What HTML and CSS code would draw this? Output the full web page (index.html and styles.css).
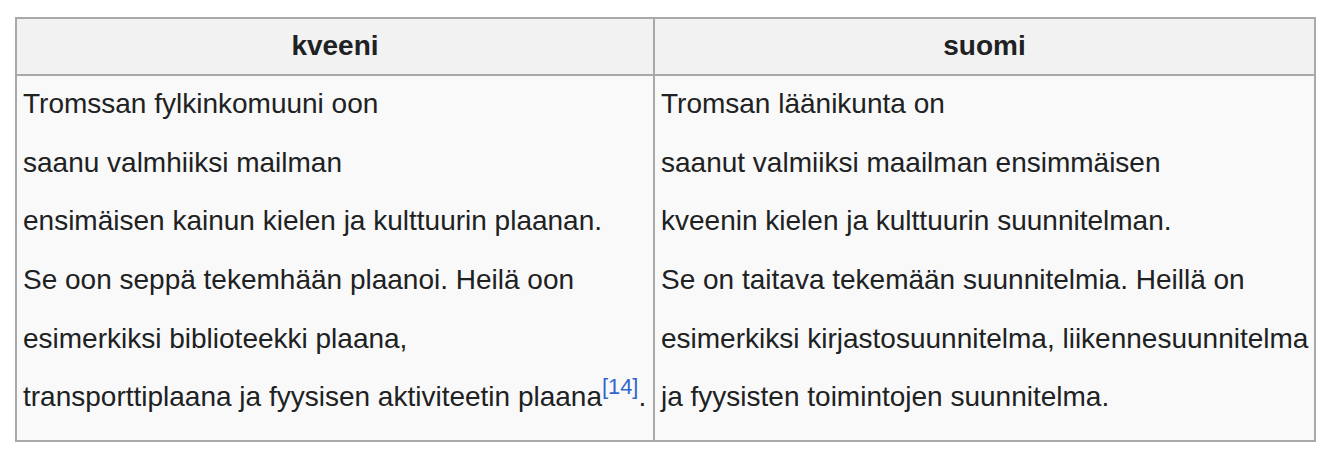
FILE: index.html
```html
<!DOCTYPE html>
<html lang="fi">
<head>
<meta charset="utf-8">
<title>kveeni / suomi</title>
<link rel="stylesheet" href="styles.css">
</head>
<body>
<div class="page">
  <table class="wikitable">
    <thead>
      <tr>
        <th class="col-a">kveeni</th>
        <th class="col-b">suomi</th>
      </tr>
    </thead>
    <tbody>
      <tr>
        <td>
          <div class="lines">
            <div class="line">Tromssan fylkinkomuuni oon</div>
            <div class="line">saanu valmhiiksi mailman</div>
            <div class="line">ensimäisen kainun kielen ja kulttuurin plaanan.</div>
            <div class="line">Se oon seppä tekemhään plaanoi. Heilä oon</div>
            <div class="line">esimerkiksi biblioteekki plaana,</div>
            <div class="line">transporttiplaana ja fyysisen aktiviteetin plaana<sup class="ref">[14]</sup>.</div>
          </div>
        </td>
        <td>
          <div class="lines">
            <div class="line">Tromsan läänikunta on</div>
            <div class="line">saanut valmiiksi maailman ensimmäisen</div>
            <div class="line">kveenin kielen ja kulttuurin suunnitelman.</div>
            <div class="line">Se on taitava tekemään suunnitelmia. Heillä on</div>
            <div class="line">esimerkiksi kirjastosuunnitelma, liikennesuunnitelma</div>
            <div class="line">ja fyysisten toimintojen suunnitelma.</div>
          </div>
        </td>
      </tr>
    </tbody>
  </table>
</div>
</body>
</html>
```

FILE: styles.css
```css
html, body {
  margin: 0;
  padding: 0;
  background: #ffffff;
}

.page {
  padding: 17px 0 0 15px;
  font-family: "Liberation Sans", Arial, sans-serif;
  font-size: 28px;
  color: #202122;
}

.wikitable {
  border-collapse: separate;
  border-spacing: 0;
  table-layout: fixed;
  width: 1301px;
  border-top: 2px solid #a9a9a9;
  border-left: 2px solid #a9a9a9;
}

.wikitable th,
.wikitable td {
  box-sizing: border-box;
  border-right: 2px solid #a9a9a9;
  border-bottom: 2px solid #a9a9a9;
}

.wikitable th {
  background: #f2f2f2;
  font-weight: bold;
  text-align: center;
  line-height: 32px;
  padding: 11px 6px 12px;
}

.col-a { width: 638px; }
.col-b { width: 661px; }

.wikitable td {
  background: #f9f9f9;
  vertical-align: top;
  text-align: left;
  padding: 12px 6px 27px;
}

.lines {
  display: flex;
  flex-direction: column;
  gap: 26.7px;
}

.line {
  line-height: 32px;
  white-space: nowrap;
}

.ref {
  font-size: 0.78em;
  line-height: 0;
  vertical-align: 12px;
  color: #3366cc;
}
```
